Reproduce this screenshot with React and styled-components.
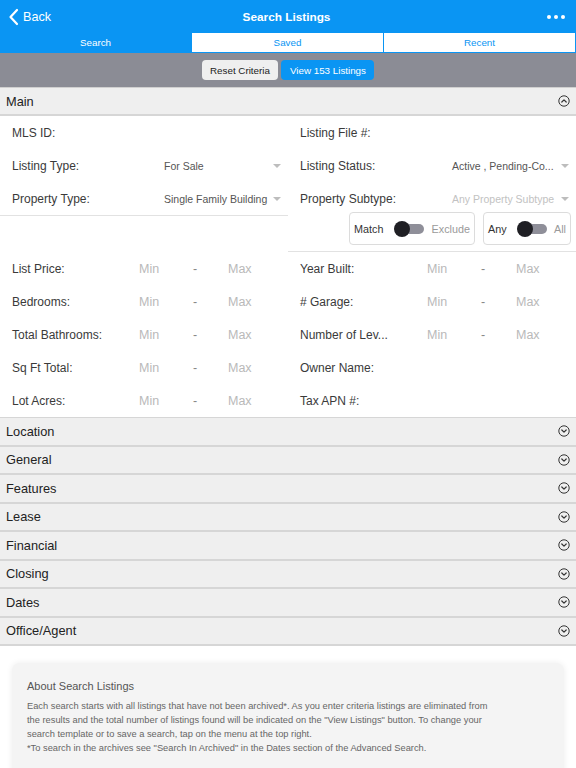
import React from 'react';
import styled, { createGlobalStyle } from 'styled-components';

const GlobalStyle = createGlobalStyle`
  body {
    margin: 0;
    background: #ffffff;
    font-family: "Liberation Sans", "Noto Sans", sans-serif;
    color: #333333;
  }
`;

const Page = styled.div`
  width: 576px;
  height: 768px;
  overflow: hidden;
  background: #ffffff;
`;

const NavBar = styled.div`
  height: 33px;
  background: #0a95f3;
  display: flex;
  align-items: center;
  justify-content: space-between;
  padding: 0 8px;
  color: #ffffff;
`;

const BackButton = styled.div`
  display: flex;
  align-items: center;
  gap: 3px;
  width: 80px;
  font-size: 12.6px;
`;

const NavTitle = styled.div`
  font-size: 11.8px;
  font-weight: 700;
`;

const NavMenu = styled.div`
  width: 80px;
  display: flex;
  justify-content: flex-end;
  gap: 3px;
  padding-right: 3px;
`;

const Dot = styled.span`
  width: 4px;
  height: 4px;
  border-radius: 50%;
  background: #ffffff;
`;

const Tabs = styled.div`
  display: flex;
  height: 20px;
  background: #0a95f3;
  padding: 0 1px 1px 0;
  box-sizing: border-box;
`;

const Tab = styled.div`
  flex: 1;
  display: flex;
  align-items: center;
  justify-content: center;
  font-size: 9.8px;
  background: ${p => (p.active ? '#0a95f3' : '#ffffff')};
  color: ${p => (p.active ? '#ffffff' : '#0a95f3')};
  & + & {
    margin-left: 1px;
  }
`;

const Toolbar = styled.div`
  height: 35px;
  box-sizing: border-box;
  background: #8b8c95;
  display: flex;
  align-items: center;
  justify-content: center;
  gap: 3px;
  border-bottom: 1px solid #d0d0d0;
`;

const ToolButton = styled.div`
  height: 20px;
  padding: 0 8.5px;
  border-radius: 4px;
  display: flex;
  align-items: center;
  font-size: 9.8px;
  background: ${p => (p.primary ? '#0a95f3' : '#efefef')};
  color: ${p => (p.primary ? '#ffffff' : '#222222')};
`;

const SectionHeader = styled.div`
  height: ${p => (p.first ? '26px' : '26.5px')};
  background: #efefef;
  display: flex;
  align-items: center;
  justify-content: space-between;
  padding: 0 6px;
  font-size: 12.8px;
  color: #222222;
  border-bottom: 2px solid #d6d6d6;
`;

const TopGrid = styled.div`
  display: grid;
  grid-template-columns: 288px 288px;
  align-items: start;
`;

const Column = styled.div`
  border-bottom: 1px solid #e2e2e2;
`;

const Row = styled.div`
  height: 33px;
  display: flex;
  align-items: center;
  padding: 0 7px 0 12px;
  font-size: 12px;
`;

const Label = styled.div`
  width: 152px;
  color: #3a3a3a;
  flex-shrink: 0;
`;

const Value = styled.div`
  flex: 1;
  display: flex;
  justify-content: space-between;
  align-items: center;
  color: ${p => (p.muted ? '#c2c2c2' : '#555555')};
  font-size: 10.5px;
  white-space: nowrap;
`;

const Caret = styled.span`
  width: 0;
  height: 0;
  border-left: 4px solid transparent;
  border-right: 4px solid transparent;
  border-top: 4px solid #bdbdbd;
  margin-left: 4px;
`;

const ToggleRow = styled.div`
  height: 39px;
  margin-top: -3px;
  display: flex;
  align-items: flex-start;
  justify-content: flex-end;
  gap: 8px;
  padding-right: 5px;
`;

const ToggleBox = styled.div`
  width: ${p => p.w}px;
  height: 33px;
  box-sizing: border-box;
  border: 1px solid #dcdcdc;
  border-radius: 4px;
  display: flex;
  align-items: center;
  justify-content: space-between;
  padding: 0 4px;
  font-size: 10.8px;
  color: #333333;
`;

const Off = styled.span`
  color: #9a9a9a;
`;

const Switch = styled.span`
  position: relative;
  width: 26px;
  height: 10px;
  border-radius: 5px;
  background: #8f8f99;
  margin-left: 8px;
  &::before {
    content: '';
    position: absolute;
    left: -4px;
    top: -3px;
    width: 16px;
    height: 16px;
    border-radius: 50%;
    background: #1f1f24;
  }
`;

const RangeGrid = styled.div`
  display: grid;
  grid-template-columns: 288px 288px;
  border-bottom: 1px solid #d6d6d6;
`;

const RangeValues = styled.div`
  display: grid;
  grid-template-columns: 54px 35px 40px;
  margin-left: -25px;
  color: #b9b9b9;
  font-size: 12.5px;
`;

const Dash = styled.span`
  color: #888888;
`;

const Card = styled.div`
  margin: 17px 12px 0;
  background: #f4f4f4;
  border-radius: 8px;
  box-shadow: 0 0 6px rgba(0, 0, 0, 0.08);
  padding: 17px 15px 20px;
  color: #666666;
`;

const CardTitle = styled.div`
  font-size: 11px;
  color: #555555;
  margin-bottom: 8px;
`;

const CardText = styled.p`
  margin: 0;
  max-width: 468px;
  font-size: 9.3px;
  line-height: 13.9px;
`;

const CircleChevron = ({ up }) => (
  <svg width="12" height="12" viewBox="0 0 12 12" fill="none" stroke="#333" strokeWidth="1">
    <circle cx="6" cy="6" r="5.2" />
    <path d={up ? 'M3.8 7 L6 4.8 L8.2 7' : 'M3.8 5 L6 7.2 L8.2 5'} strokeWidth="1.2" strokeLinecap="round" strokeLinejoin="round" />
  </svg>
);

const ChevronLeft = () => (
  <svg width="12" height="18" viewBox="0 0 12 18" fill="none" stroke="#fff" strokeWidth="2.2" strokeLinecap="round" strokeLinejoin="round">
    <path d="M9 2 L2.5 9 L9 16" />
  </svg>
);

const topLeft = [
  { label: 'MLS ID:' },
  { label: 'Listing Type:', value: 'For Sale', caret: true },
  { label: 'Property Type:', value: 'Single Family Building', caret: true },
];

const topRight = [
  { label: 'Listing File #:' },
  { label: 'Listing Status:', value: 'Active , Pending-Co...', caret: true },
  { label: 'Property Subtype:', value: 'Any Property Subtype', caret: true, muted: true },
];

const rangeLeft = [
  { label: 'List Price:', range: true },
  { label: 'Bedrooms:', range: true },
  { label: 'Total Bathrooms:', range: true },
  { label: 'Sq Ft Total:', range: true },
  { label: 'Lot Acres:', range: true },
];

const rangeRight = [
  { label: 'Year Built:', range: true },
  { label: '# Garage:', range: true },
  { label: 'Number of Lev...', range: true },
  { label: 'Owner Name:' },
  { label: 'Tax APN #:' },
];

const sections = ['Location', 'General', 'Features', 'Lease', 'Financial', 'Closing', 'Dates', 'Office/Agent'];

const Field = ({ field }) => (
  <Row>
    <Label>{field.label}</Label>
    {field.value && (
      <Value muted={field.muted}>
        {field.value}
        {field.caret && <Caret />}
      </Value>
    )}
    {field.range && (
      <RangeValues>
        <span>Min</span>
        <Dash>-</Dash>
        <span>Max</span>
      </RangeValues>
    )}
  </Row>
);

const App = () => (
  <Page>
    <GlobalStyle />
    <NavBar>
      <BackButton>
        <ChevronLeft />
        Back
      </BackButton>
      <NavTitle>Search Listings</NavTitle>
      <NavMenu>
        <Dot />
        <Dot />
        <Dot />
      </NavMenu>
    </NavBar>
    <Tabs>
      <Tab active>Search</Tab>
      <Tab>Saved</Tab>
      <Tab>Recent</Tab>
    </Tabs>
    <Toolbar>
      <ToolButton>Reset Criteria</ToolButton>
      <ToolButton primary>View 153 Listings</ToolButton>
    </Toolbar>

    <SectionHeader first>
      Main
      <CircleChevron up />
    </SectionHeader>
    <TopGrid>
      <Column>
        {topLeft.map(f => <Field key={f.label} field={f} />)}
      </Column>
      <Column>
        {topRight.map(f => <Field key={f.label} field={f} />)}
        <ToggleRow>
          <ToggleBox w={126}>
            Match
            <Switch />
            <Off>Exclude</Off>
          </ToggleBox>
          <ToggleBox w={88}>
            Any
            <Switch />
            <Off>All</Off>
          </ToggleBox>
        </ToggleRow>
      </Column>
    </TopGrid>
    <RangeGrid>
      <div>
        {rangeLeft.map(f => <Field key={f.label} field={f} />)}
      </div>
      <div>
        {rangeRight.map(f => <Field key={f.label} field={f} />)}
      </div>
    </RangeGrid>

    {sections.map(name => (
      <SectionHeader key={name}>
        {name}
        <CircleChevron />
      </SectionHeader>
    ))}

    <Card>
      <CardTitle>About Search Listings</CardTitle>
      <CardText>
        Each search starts with all listings that have not been archived*. As you enter criteria listings are eliminated from
        the results and the total number of listings found will be indicated on the "View Listings" button. To change your
        search template or to save a search, tap on the menu at the top right.
        <br />
        *To search in the archives see "Search In Archived" in the Dates section of the Advanced Search.
      </CardText>
    </Card>
  </Page>
);

export default App;
